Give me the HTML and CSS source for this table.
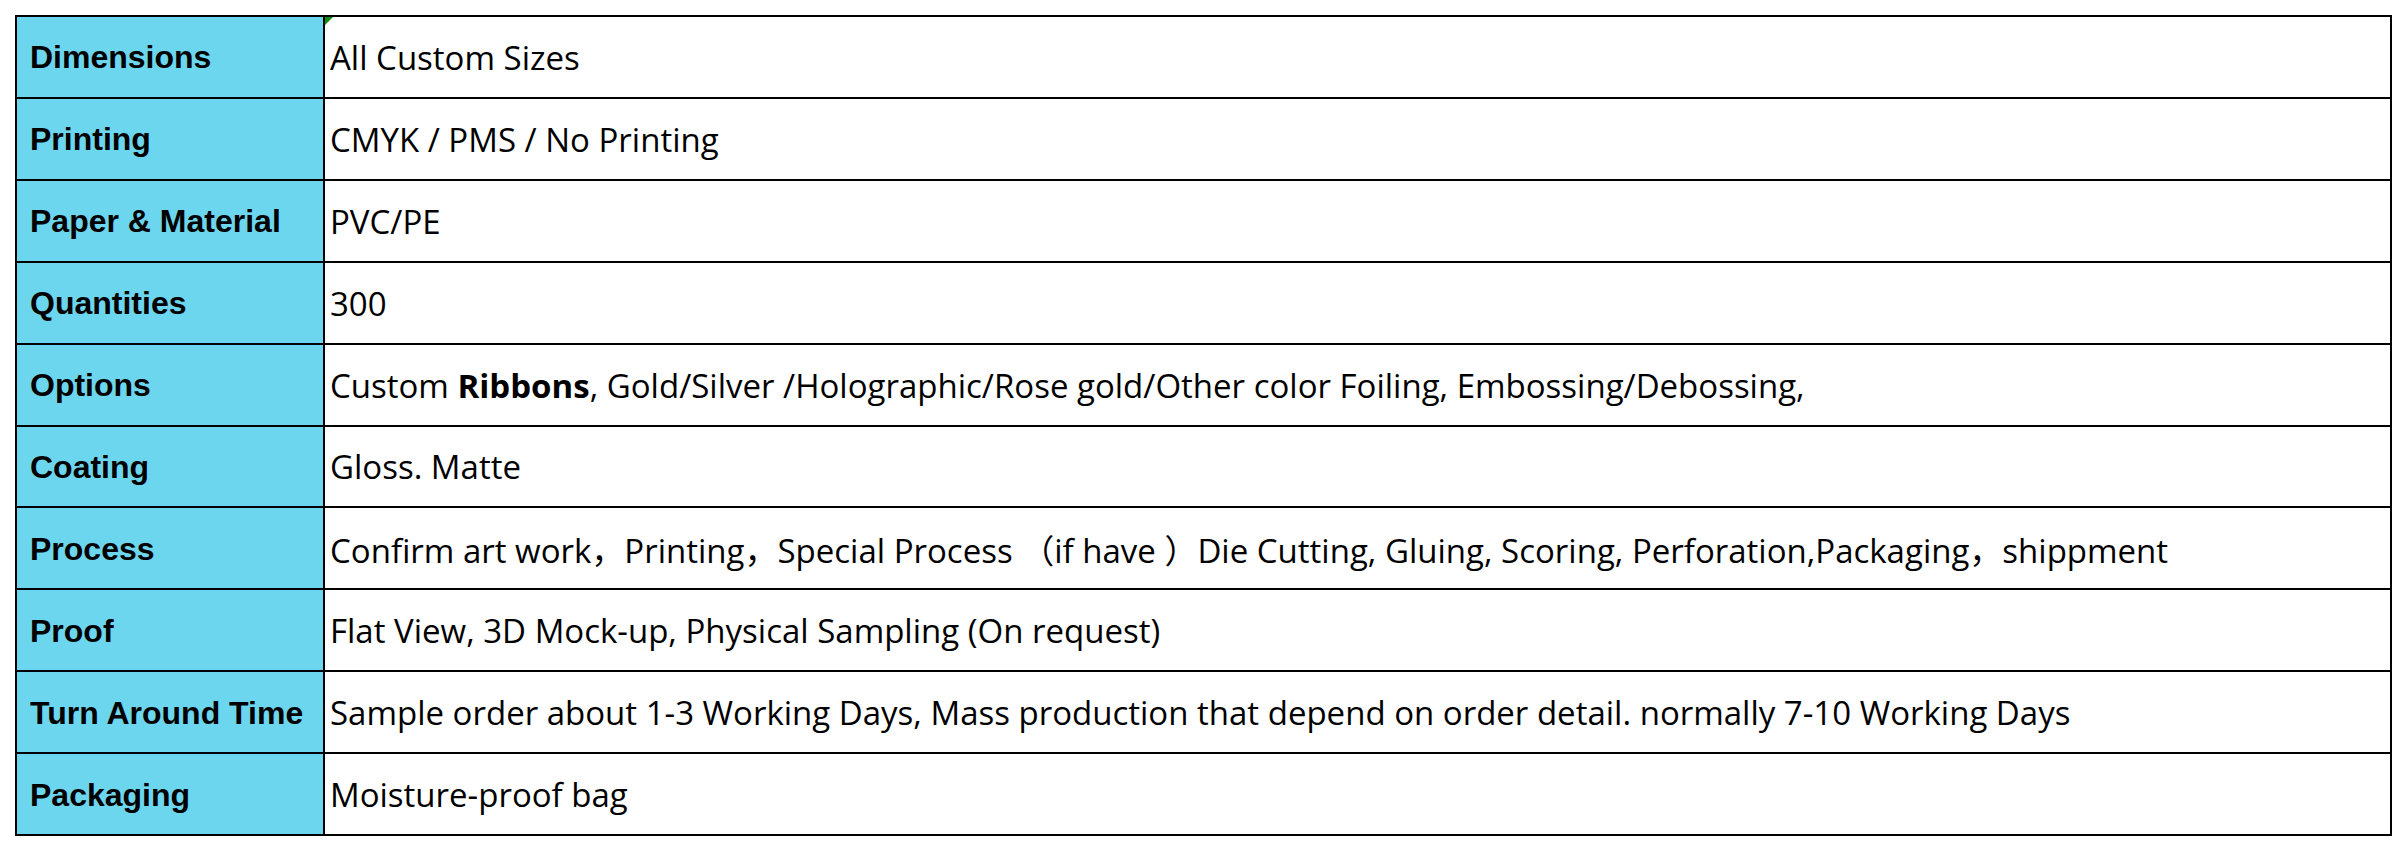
FILE: index.html
```html
<!DOCTYPE html>
<html lang="en">
<head>
<meta charset="utf-8">
<title>Specifications</title>
<link rel="stylesheet" href="styles.css">
</head>
<body>
<div class="page">
  <div class="spec">
    <div class="label">Dimensions</div>
    <div class="value first"><span class="flag"></span><span class="txt">All Custom Sizes</span></div>
    <div class="label">Printing</div>
    <div class="value"><span class="txt">CMYK / PMS / No Printing</span></div>
    <div class="label">Paper &amp; Material</div>
    <div class="value"><span class="txt">PVC/PE</span></div>
    <div class="label">Quantities</div>
    <div class="value"><span class="txt">300</span></div>
    <div class="label">Options</div>
    <div class="value"><span class="txt">Custom <b>Ribbons</b>, Gold/Silver /Holographic/Rose gold/Other color Foiling, Embossing/Debossing,</span></div>
    <div class="label">Coating</div>
    <div class="value"><span class="txt">Gloss. Matte</span></div>
    <div class="label">Process</div>
    <div class="value"><span class="txt">Confirm art work，Printing，Special Process （if have ）Die Cutting, Gluing, Scoring, Perforation,Packaging，shippment</span></div>
    <div class="label">Proof</div>
    <div class="value"><span class="txt">Flat View, 3D Mock-up, Physical Sampling (On request)</span></div>
    <div class="label">Turn Around Time</div>
    <div class="value"><span class="txt">Sample order about 1-3 Working Days, Mass production that depend on order detail. normally 7-10 Working Days</span></div>
    <div class="label">Packaging</div>
    <div class="value"><span class="txt">Moisture-proof bag</span></div>
  </div>
</div>
</body>
</html>
```

FILE: styles.css
```css
html, body {
  margin: 0;
  padding: 0;
  background: #ffffff;
}

.page {
  padding: 15px 0 0 15px;
}

.spec {
  width: 2377px;
  height: 821px;
  box-sizing: border-box;
  display: grid;
  grid-template-columns: 306px 1fr;
  grid-template-rows: repeat(10, 1fr);
  gap: 2px;
  padding: 2px;
  background: #000000;
}

.label {
  background: #6cd6ee;
  display: flex;
  align-items: center;
  padding-left: 13px;
  padding-top: 2px;
  font-family: "Liberation Sans", Arial, sans-serif;
  font-weight: bold;
  font-size: 32px;
  color: #000000;
  white-space: nowrap;
}

.value {
  position: relative;
  background: #ffffff;
  display: flex;
  align-items: center;
  padding-left: 5px;
  padding-top: 1px;
  font-family: "Open Sans", "Noto Sans CJK SC", sans-serif;
  font-size: 33px;
  color: #000000;
  white-space: nowrap;
}

.value b {
  font-weight: bold;
}

.flag {
  position: absolute;
  left: 0;
  top: 0;
  width: 0;
  height: 0;
  border-top: 8px solid #108a10;
  border-right: 8px solid transparent;
}
```
